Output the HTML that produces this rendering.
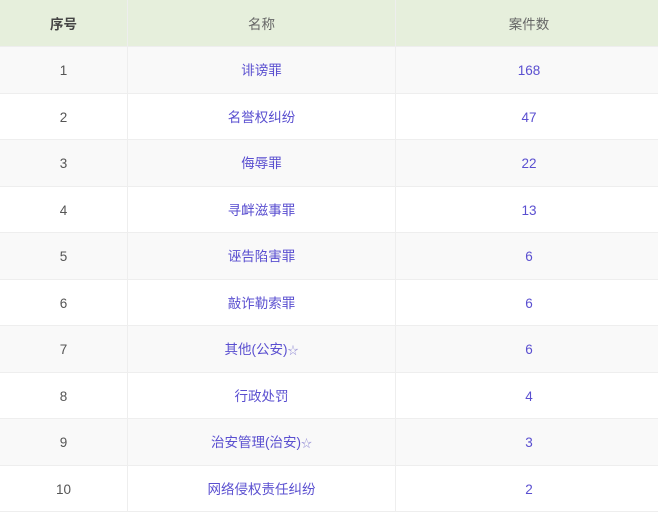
<!DOCTYPE html>
<html><head><meta charset="utf-8"><style>
body{margin:0;background:#fff;font-family:"Liberation Sans","Noto Sans CJK SC",sans-serif;font-size:13.5px;}
.r{position:absolute;left:0;width:658px;border-bottom:1px solid #eee;box-sizing:border-box;}
.c{position:absolute;top:0;bottom:0;display:flex;align-items:center;justify-content:center;line-height:16px;padding-top:3px;box-sizing:border-box;}
.c span,.c{white-space:nowrap;}
.a{left:0;width:128px;border-right:1px solid #eee;color:#555;}
.b{left:128px;width:268px;border-right:1px solid #eee;color:#5a4fd0;}
.d{left:397px;width:264px;color:#5a4fd0;}
.h{top:0;height:47px;background:#e6efdc;}
.h .c{color:#666;padding-top:3px;}
.h .a{font-weight:bold;color:#444;}
.s{font-size:11px;color:#9a94d8;line-height:16px;}
</style></head><body>
<div class="r h"><div class="c a">序号</div><div class="c b">名称</div><div class="c d">案件数</div></div>
<div class="r" style="top:47px;height:46.5px;background:#f9f9f9"><div class="c a">1</div><div class="c b">诽谤罪</div><div class="c d">168</div></div>
<div class="r" style="top:93.5px;height:46.5px"><div class="c a">2</div><div class="c b">名誉权纠纷</div><div class="c d">47</div></div>
<div class="r" style="top:140px;height:46.5px;background:#f9f9f9"><div class="c a">3</div><div class="c b">侮辱罪</div><div class="c d">22</div></div>
<div class="r" style="top:186.5px;height:46.5px"><div class="c a">4</div><div class="c b">寻衅滋事罪</div><div class="c d">13</div></div>
<div class="r" style="top:233px;height:46.5px;background:#f9f9f9"><div class="c a">5</div><div class="c b">诬告陷害罪</div><div class="c d">6</div></div>
<div class="r" style="top:279.5px;height:46.5px"><div class="c a">6</div><div class="c b">敲诈勒索罪</div><div class="c d">6</div></div>
<div class="r" style="top:326px;height:46.5px;background:#f9f9f9"><div class="c a">7</div><div class="c b"><span>其他(公安)<span class="s">☆</span></span></div><div class="c d">6</div></div>
<div class="r" style="top:372.5px;height:46.5px"><div class="c a">8</div><div class="c b">行政处罚</div><div class="c d">4</div></div>
<div class="r" style="top:419px;height:46.5px;background:#f9f9f9"><div class="c a">9</div><div class="c b"><span>治安管理(治安)<span class="s">☆</span></span></div><div class="c d">3</div></div>
<div class="r" style="top:465.5px;height:46.5px"><div class="c a">10</div><div class="c b">网络侵权责任纠纷</div><div class="c d">2</div></div>
</body></html>
